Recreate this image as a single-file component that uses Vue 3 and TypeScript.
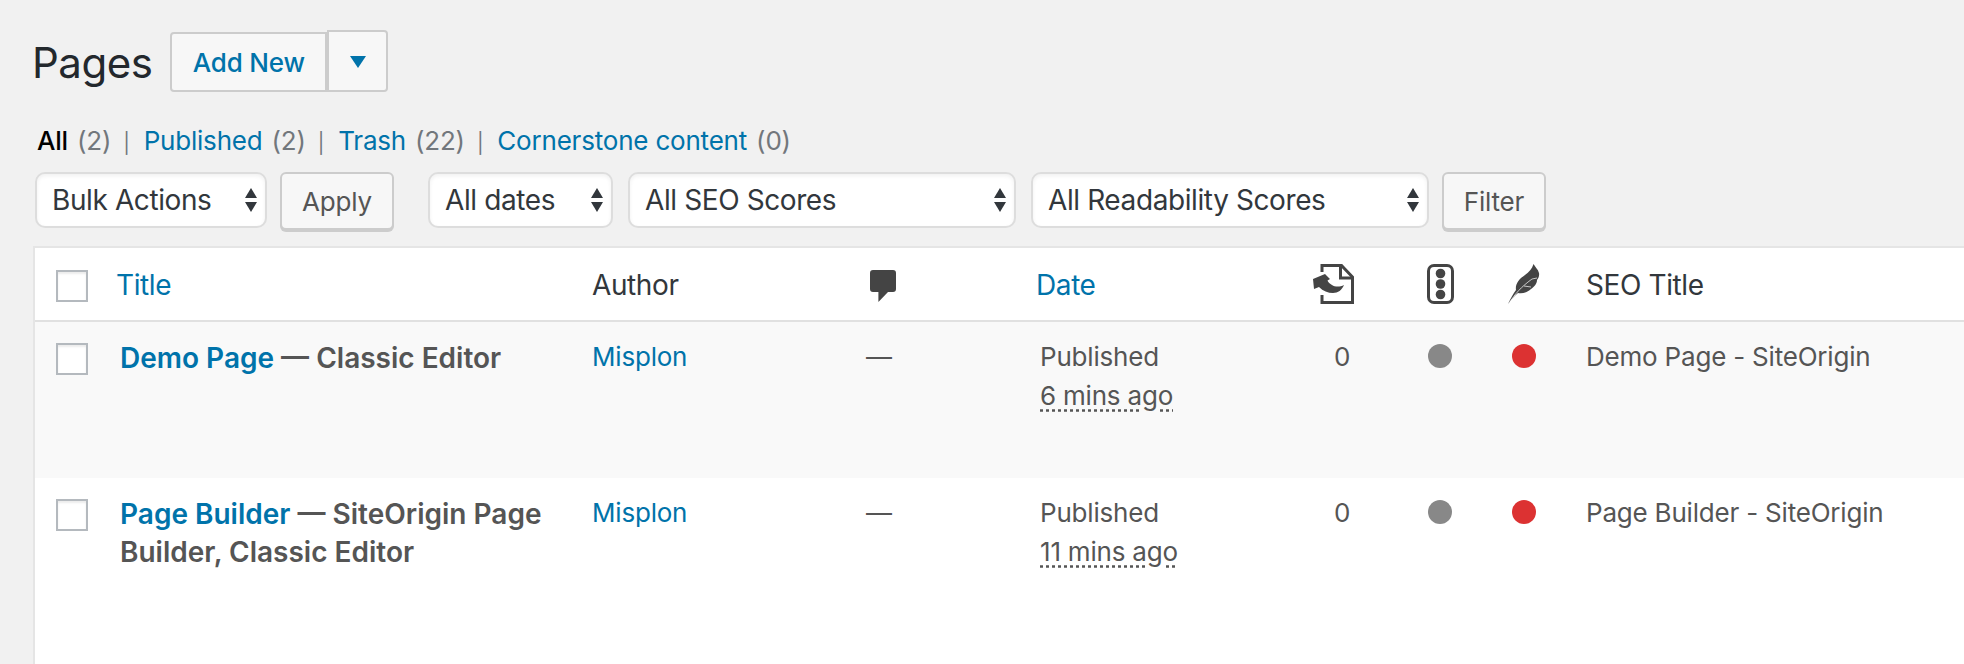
<script setup lang="ts">
interface Row { name: string; state: string; seoTitle: string; age: string }
const rows: Row[] = [
  { name: 'Demo Page', state: 'Classic Editor', seoTitle: 'Demo Page - SiteOrigin', age: '6 mins ago' },
  { name: 'Page Builder', state: 'SiteOrigin Page Builder, Classic Editor', seoTitle: 'Page Builder - SiteOrigin', age: '11 mins ago' },
]
const views = [
  { label: 'All', count: 2, current: true },
  { label: 'Published', count: 2, current: false },
  { label: 'Trash', count: 22, current: false },
  { label: 'Cornerstone content', count: 0, current: false },
]
</script>

<template>
  <div class="wrap">
    <header class="heading">
      <h1>Pages</h1>
      <a class="add">Add New</a>
      <span class="split"><i class="tri"></i></span>
    </header>

    <ul class="views">
      <li v-for="(v, i) in views" :key="v.label">
        <span v-if="i" class="sep">|</span>
        <a :class="{ current: v.current }">{{ v.label }}</a>
        <span class="count">({{ v.count }})</span>
      </li>
    </ul>

    <div class="filters">
      <div class="select bulk">Bulk Actions<span class="arrows"><i></i><i></i></span></div>
      <button class="btn apply">Apply</button>
      <div class="select dates">All dates<span class="arrows"><i></i><i></i></span></div>
      <div class="select seo">All SEO Scores<span class="arrows"><i></i><i></i></span></div>
      <div class="select read">All Readability Scores<span class="arrows"><i></i><i></i></span></div>
      <button class="btn filter">Filter</button>
    </div>

    <table class="list">
      <colgroup>
        <col class="c-cb" /><col class="c-title" /><col class="c-author" /><col class="c-com" />
        <col class="c-date" /><col class="c-links" /><col class="c-seo" /><col class="c-read" /><col class="c-stitle" />
      </colgroup>
      <thead>
        <tr>
          <th class="cb"><span class="check"></span></th>
          <th><a>Title</a></th>
          <th>Author</th>
          <th class="com">
            <svg class="ic" width="26" height="32" viewBox="0 0 26 32"><path fill="#444" d="M3 0h20a3 3 0 0 1 3 3v16a3 3 0 0 1-3 3h-5L8.400 32V22H3a3 3 0 0 1-3-3V3a3 3 0 0 1 3-3z"/></svg>
          </th>
          <th><a>Date</a></th>
          <th class="iconcell">
            <svg class="ic" width="41" height="40" viewBox="0 0 41 40"><path fill="none" stroke="#444" stroke-width="3" d="M9 8V1.500h19.500L39.500 13v25.500H9V31"/><path fill="none" stroke="#444" stroke-width="3" d="M27.500 1.500V14H40"/><path fill="#444" d="M12 10L0 15l1 10 5-2c4 4 9 6 14 6 5 0 9-3 11-8-4 2-9 2-12 0-2-1-4-3-4.500-4.500L17 15z"/></svg>
          </th>
          <th class="iconcell">
            <svg class="ic" width="27" height="40" viewBox="0 0 27 40"><rect x="1.500" y="1.500" width="24" height="37" rx="5.500" fill="none" stroke="#444" stroke-width="3"/><circle cx="13.500" cy="9.500" r="4.800" fill="#444"/><circle cx="13.500" cy="20" r="4.800" fill="#444"/><circle cx="13.500" cy="30.500" r="4.800" fill="#444"/></svg>
          </th>
          <th class="iconcell">
            <svg class="ic" width="32" height="40" viewBox="0 0 32 40"><path fill="#444" d="M0 40C3 34 5 30 8 26 7 20 11 15 17 11 21 8 24 5 25.500 0 27 3 30 5 31 9 31.500 12 30.500 14 29 16 29 20 26 23 23 25 20 28 15 30 10 29 6 32 3 36 0 40z"/><path fill="none" stroke="#fff" stroke-width="0.700" d="M2 38C7 30 13 23 24 15M24 15l5-1M16 22l7 1"/></svg>
          </th>
          <th>SEO Title</th>
        </tr>
      </thead>
      <tbody>
        <tr v-for="(r, i) in rows" :key="r.name" :class="i === 0 ? 'odd' : 'even'">
          <td class="cb"><span class="check"></span></td>
          <td class="title"><a>{{ r.name }}</a> — {{ r.state }}</td>
          <td><a>Misplon</a></td>
          <td class="dash">—</td>
          <td class="date">Published<br /><abbr>{{ r.age }}</abbr></td>
          <td class="num">0</td>
          <td><span class="dot grey"></span></td>
          <td class="redcell"><span class="dot red"></span></td>
          <td>{{ r.seoTitle }}</td>
        </tr>
      </tbody>
    </table>
  </div>
</template>

<style>
html, body { margin: 0; height: 664px; overflow: hidden; background: #f1f1f1; }
</style>

<style scoped>
.wrap {
  height: 664px;
  overflow: hidden;
  padding: 30px 0 0 33px;
  box-sizing: border-box;
  font-family: Inter, "Liberation Sans", sans-serif;
  font-size: 26px;
  letter-spacing: -0.2px;
  color: #555;
}
a { color: #0073aa; }

.heading { display: flex; align-items: flex-end; height: 62px; }
h1 { margin: 0 18px 4px -1px; font-size: 42px; letter-spacing: -0.5px; line-height: 50px; font-weight: 400; color: #23282d; }
.add {
  box-sizing: border-box; width: 157px; height: 60px; display: flex; align-items: center; justify-content: center;
  border: 2px solid #ccc; border-radius: 4px 0 0 4px; background: #f7f7f7; font-weight: 500;
}
.split {
  box-sizing: border-box; width: 61px; height: 62px; display: flex; align-items: center; justify-content: center;
  border: 2px solid #ccc; border-radius: 0 4px 4px 0; background: #f7f7f7;
}
.tri { width: 0; height: 0; border: 8.500px solid transparent; border-top: 12px solid #0073aa; border-bottom: 0; margin-top: 2px; }

.views { list-style: none; display: flex; margin: 29px 0 0 4px; padding: 0; height: 40px; line-height: 40px; }
.views li { white-space: nowrap; }
.views .current { color: #000; font-weight: 500; }
.count { color: #72777c; margin-left: 9px; }
.sep { color: #72777c; font-size: 20px; margin: 0 14px 0 12px; }

.filters { display: flex; margin: 11px 0 0 2px; align-items: flex-start; height: 58px; }
.select {
  box-sizing: border-box; height: 56px; display: flex; align-items: center; justify-content: space-between;
  padding: 0 8px 0 15px; background: #fff; border: 2px solid #ddd; border-radius: 10px; color: #32373c;
  font-size: 28px; letter-spacing: -0.4px;
  box-shadow: inset 0 2px 4px rgba(0, 0, 0, 0.06);
}
.arrows { display: flex; flex-direction: column; gap: 4px; }
.arrows i { display: block; width: 0; height: 0; border-left: 6px solid transparent; border-right: 6px solid transparent; }
.arrows i:first-child { border-bottom: 10px solid #32373c; }
.arrows i:last-child { border-top: 10px solid #32373c; }
.bulk { width: 232px; }
.dates { width: 185px; margin-left: 34px; }
.seo { width: 388px; margin-left: 15px; }
.read { width: 398px; margin-left: 15px; }
.btn {
  box-sizing: border-box; height: 58px; font: inherit; letter-spacing: inherit; color: #555; background: #f7f7f7;
  border: 2px solid #ccc; border-radius: 6px; box-shadow: 0 2px 0 #ccc; padding: 0;
}
.apply { width: 114px; margin-left: 13px; }
.filter { width: 104px; margin-left: 13px; }

.list {
  margin-top: 16px; table-layout: fixed; width: 2031px; border-collapse: separate; border-spacing: 0;
  background: #fff; border-top: 2px solid #e5e5e5; border-left: 2px solid #e5e5e5;
}
.c-cb { width: 61px; }
.c-title { width: 476px; }
.c-author { width: 276px; }
.c-com { width: 168px; }
.c-date { width: 277px; }
.c-links { width: 114px; }
.c-seo { width: 81px; }
.c-read { width: 78px; }
.c-stitle { width: 500px; }
th, td { text-align: left; vertical-align: top; font-weight: 400; padding: 15px 0 0 20px; line-height: 39px; }
th { height: 74px; box-sizing: border-box; border-bottom: 2px solid #e1e1e1; color: #32373c; padding-top: 18px; font-size: 28px; letter-spacing: -0.4px; }
th.iconcell { padding-top: 16px; }
th .ic { display: block; }
th.com { padding-top: 22px; }
th.com .ic { margin-left: 2px; }
th.cb, td.cb { padding-left: 21px; }
th.cb { padding-top: 22px; }
td.cb { padding-top: 21px; }
.check {
  display: block; box-sizing: border-box; width: 32px; height: 32px; background: #fff;
  border: 2px solid #b4b9be; box-shadow: inset 0 2px 2px rgba(0, 0, 0, 0.08);
}
.odd td { background: #f9f9f9; height: 156px; box-sizing: border-box; }
.even td { background: #fff; height: 260px; box-sizing: border-box; }
td.title { font-size: 28px; line-height: 38px; font-weight: 600; letter-spacing: 0; padding-left: 24px; padding-top: 17px; padding-right: 20px; }
td.dash { padding-left: 18px; }
td.date { padding-left: 24px; }
abbr { text-decoration: underline dotted; text-underline-offset: 4px; }
td.num { padding-left: 41px; }
td.redcell { padding-left: 24px; }
.dot { display: block; width: 24px; height: 24px; border-radius: 50%; margin: 7px 0 0 1px; }
.redcell .dot { margin-left: 0; }
.grey { background: #888; }
.red { background: #dc3232; }
</style>
